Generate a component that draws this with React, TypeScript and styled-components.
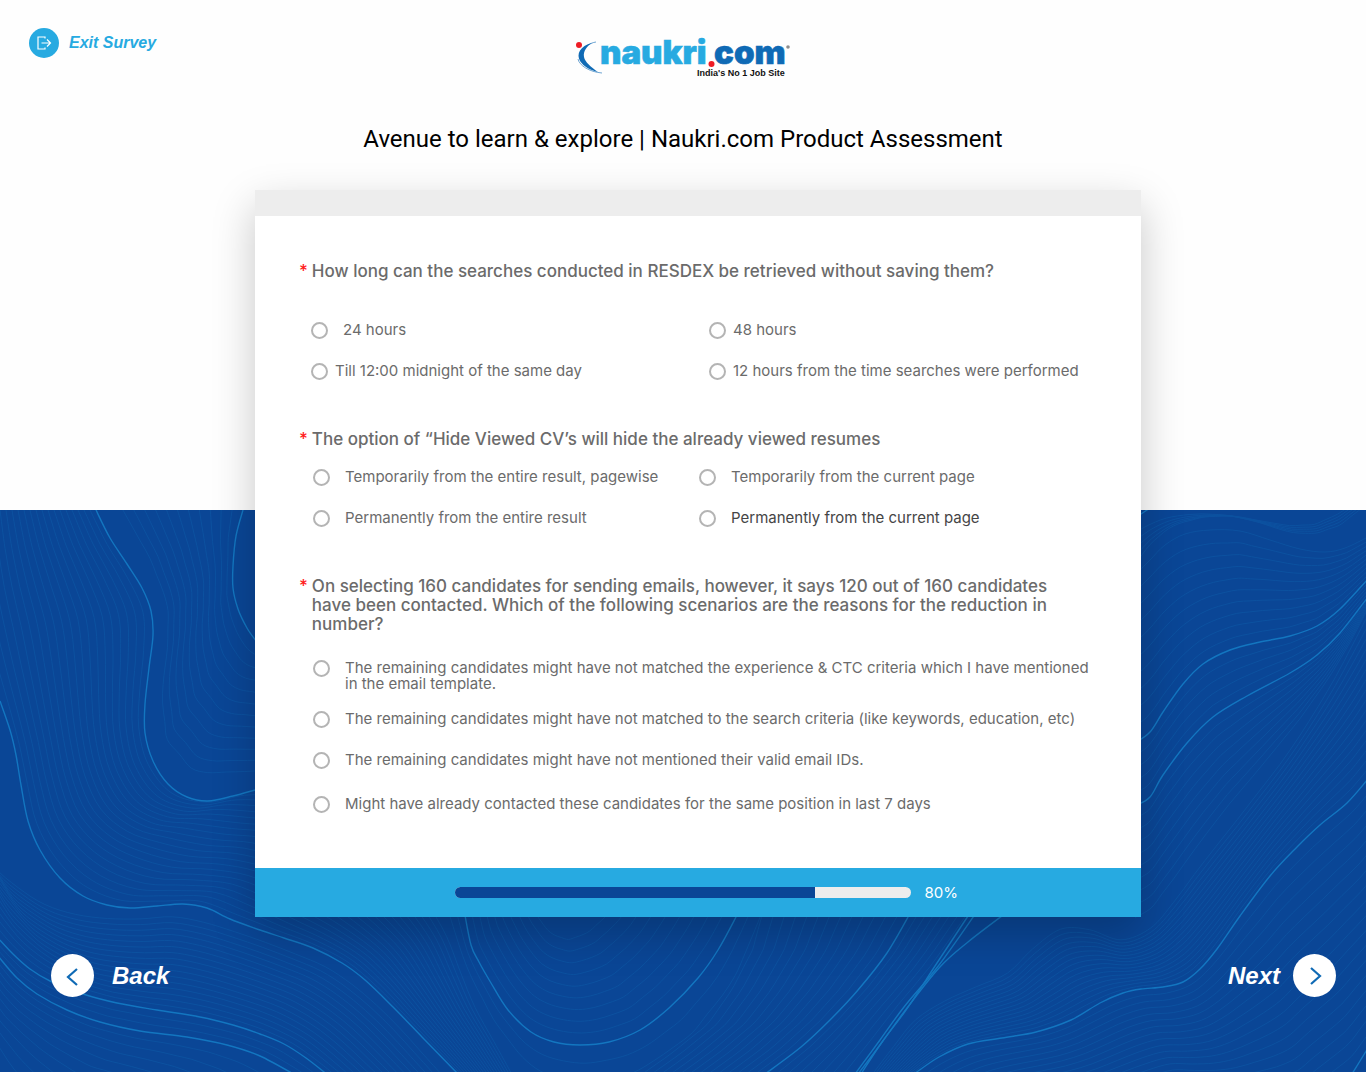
import React, { useId } from "react";
import styled, { createGlobalStyle } from "styled-components";

const colors = {
  sky: "#27aae1",
  navy: "#0a4696",
  royal: "#0f6ab5",
  line: "#1376c0",
  text: "#6b6b6b",
  dark: "#454545",
  ring: "#b4b4b4",
  red: "#ee1c25",
  pale: "#ededed",
};

const GlobalStyle = createGlobalStyle`
  *, *::before, *::after { box-sizing: border-box; }
  body { margin: 0; background: #fefefe; }
`;

const Page = styled.div`
  position: relative;
  min-height: 100vh;
  display: flex;
  flex-direction: column;
  font-family: Inter, "Open Sans", sans-serif;
  color: ${colors.text};
  isolation: isolate;
`;

const Backdrop = styled.div`
  position: absolute;
  inset: 510px 0 0;
  z-index: -1;
  overflow: hidden;
  background: ${colors.navy};

  svg {
    display: block;
    width: 100%;
    height: 100%;
  }
`;

const Header = styled.header`
  display: grid;
  grid-template-columns: 1fr auto 1fr;
  align-items: start;
  padding: 28px 29px 0;
`;

const ExitButton = styled.button`
  justify-self: start;
  display: flex;
  align-items: center;
  gap: 10px;
  padding: 0;
  border: 0;
  background: none;
  color: ${colors.sky};
  font: italic bold 16px/30px "Liberation Sans", Arial, sans-serif;
  cursor: pointer;
`;

const ExitBadge = styled.span`
  display: grid;
  place-items: center;
  width: 30px;
  height: 30px;
  border-radius: 50%;
  background: ${colors.sky};
  color: #fff;
`;

const Title = styled.h1`
  margin: 46px 0 36px;
  text-align: center;
  color: #000;
  font: 400 24px/30px Roboto, "Liberation Sans", sans-serif;
`;

const Main = styled.main`
  padding: 0 225px 0 255px;
`;

const Card = styled.form`
  background: #fff;
  box-shadow: 0 16px 40px rgba(0, 0, 0, 0.22);
`;

const CardStrip = styled.div`
  height: 26px;
  background: ${colors.pale};
`;

const CardBody = styled.div`
  display: flex;
  flex-direction: column;
  gap: 47px;
  padding: 46px 44px 55px;
`;

const Question = styled.fieldset`
  min-width: 0;
  margin: 0;
  padding: 0;
  border: 0;
`;

const Legend = styled.legend`
  padding: 0;
`;

const QuestionText = styled.span`
  display: flex;
  gap: 4px;
  max-width: 760px;
  font-size: 17px;
  font-weight: 500;
  line-height: 19px;
`;

const Star = styled.span`
  flex: 0 0 8px;
  color: #ff1e1e;
`;

const ChoiceGrid = styled.div<{ $first: number; $top: number; $left: number }>`
  display: grid;
  grid-template-columns: ${(p) => p.$first}px 1fr;
  row-gap: 17px;
  padding: ${(p) => p.$top}px 0 0 ${(p) => p.$left}px;
`;

const ChoiceList = styled.div`
  display: flex;
  flex-direction: column;
  padding: 8px 0 0 14px;
`;

const Choice = styled.label<{ $tight?: boolean; $dark?: boolean }>`
  display: flex;
  align-items: center;
  gap: ${(p) => (p.$tight ? 7 : 15)}px;
  height: 24px;
  font-size: 15px;
  line-height: 16px;
  color: ${(p) => (p.$dark ? colors.dark : "inherit")};
  cursor: pointer;
`;

const LongChoice = styled(Choice)<{ $space: number }>`
  align-items: flex-start;
  height: auto;
  margin-top: ${(p) => p.$space}px;
`;

const Radio = styled.input`
  appearance: none;
  flex: none;
  width: 17px;
  height: 17px;
  margin: 0;
  border: 2px solid ${colors.ring};
  border-radius: 50%;
  background: #fff;

  &:checked {
    border-color: ${colors.sky};
    box-shadow: inset 0 0 0 3px #fff;
    background: ${colors.sky};
  }
`;

const CardFooter = styled.div`
  display: flex;
  align-items: center;
  gap: 14px;
  height: 49px;
  padding: 0 183px 0 200px;
  background: ${colors.sky};
  color: #fff;
`;

const Track = styled.div`
  flex: 1;
  height: 11px;
  border-radius: 6px;
  overflow: hidden;
  background: ${colors.pale};
`;

const Fill = styled.div`
  height: 100%;
  background: ${colors.navy};
`;

const Percent = styled.span`
  font-size: 15px;
  line-height: 20px;
`;

const Pager = styled.nav`
  display: flex;
  justify-content: space-between;
  padding: 37px 30px 75px 51px;
`;

const PagerButton = styled.button<{ $gap: number }>`
  display: flex;
  align-items: center;
  gap: ${(p) => p.$gap}px;
  padding: 0;
  border: 0;
  background: none;
  color: #fff;
  font: italic bold 24px/43px "Liberation Sans", Arial, sans-serif;
  cursor: pointer;
`;

const PagerDisc = styled.span`
  display: grid;
  place-items: center;
  width: 43px;
  height: 43px;
  border-radius: 50%;
  background: #fff;
  color: ${colors.royal};
`;

type Pt = [number, number];

const curve = {
  a: [[96, 0], [110, 28], [127, 54], [142, 78], [151, 101], [153, 125], [149, 158], [145, 194], [145, 223], [153, 251], [168, 274], [187, 287], [208, 291], [233, 286], [255, 280]] as Pt[],
  aLong: [[96, 0], [110, 28], [127, 54], [142, 78], [151, 101], [153, 125], [149, 158], [145, 194], [145, 223], [153, 251], [168, 274], [187, 287], [208, 291], [255, 280], [320, 280], [400, 330], [450, 420], [475, 490], [515, 565]] as Pt[],
  b: [[0, 191], [10, 220], [16, 245], [21, 275], [28, 311], [40, 340], [60, 368], [83, 386], [107, 395], [130, 398], [157, 396], [183, 394], [207, 398], [230, 409], [260, 420], [284, 428], [313, 438], [342, 453], [365, 470], [393, 497], [422, 527], [458, 564]] as Pt[],
  bLong: [[-30, 0], [-28, 70], [-18, 130], [0, 191], [10, 220], [21, 275], [28, 311], [40, 340], [60, 368], [83, 386], [107, 395], [130, 398], [157, 396], [183, 394], [207, 398], [230, 409], [260, 420], [313, 438], [342, 453], [365, 470], [393, 497], [458, 564]] as Pt[],
  c: [[-2, 428], [13, 444], [30, 459], [50, 471], [83, 484], [117, 493], [157, 500], [200, 507], [233, 515], [260, 524], [284, 534], [306, 548], [329, 566]] as Pt[],
  bLow: [[-60, 191], [-40, 290], [-10, 350], [30, 385], [83, 402], [130, 404], [183, 400], [230, 414], [284, 433], [342, 458], [393, 502], [450, 566]] as Pt[],
  d: [[-2, 446], [17, 468], [37, 484], [67, 500], [100, 512], [140, 521], [187, 527], [227, 535], [260, 546], [297, 566]] as Pt[],
  corner: [[-30, 480], [-20, 520], [0, 560], [20, 590], [40, 600], [60, 610], [80, 620], [100, 630]] as Pt[],
  e: [[243, 0], [236, 26], [233, 56], [233, 78], [238, 99], [247, 118], [256, 131]] as Pt[],
  eLong: [[243, 0], [236, 26], [233, 56], [233, 78], [238, 99], [247, 118], [256, 131], [300, 150]] as Pt[],
  aShort: [[112, 0], [142, 50], [162, 98], [162, 140], [155, 194], [160, 240], [190, 275], [255, 272], [300, 265]] as Pt[],
  f: [[464, 400], [471, 435], [479, 452], [491, 473], [508, 500], [531, 522], [554, 532], [580, 535], [609, 532], [640, 520], [669, 498], [698, 468], [718, 440], [736, 407], [739, 400]] as Pt[],
  fTop: [[530, 370], [540, 395], [552, 412], [566, 418], [582, 412], [600, 395], [615, 370]] as Pt[],
  fDown: [[440, 400], [465, 470], [490, 520], [530, 575], [580, 592], [640, 580], [700, 540], [745, 480], [775, 400]] as Pt[],
  g: [[912, 400], [887, 443], [858, 480], [830, 510], [801, 537], [765, 564]] as Pt[],
  gUp: [[752, 400], [742, 440], [722, 480], [698, 515], [660, 545], [630, 566]] as Pt[],
  h: [[978, 400], [939, 455], [904, 497], [880, 530], [855, 564]] as Pt[],
  h2: [[1010, 400], [968, 432], [939, 458], [904, 502], [880, 535], [858, 564]] as Pt[],
  h3: [[972, 400], [937, 453], [906, 500], [882, 532], [861, 564]] as Pt[],
  i: [[914, 564], [939, 547], [968, 534], [1002, 528], [1036, 522], [1071, 510], [1100, 493], [1123, 483], [1141, 479], [1163, 477], [1183, 472], [1200, 459], [1217, 439], [1240, 406], [1270, 366], [1297, 337], [1320, 315], [1347, 293], [1368, 269]] as Pt[],
  iUp: [[870, 564], [910, 510], [955, 480], [1000, 465], [1040, 425], [1075, 405], [1100, 425], [1135, 428], [1160, 405], [1200, 350], [1240, 300], [1290, 235], [1330, 170], [1368, 95]] as Pt[],
  j: [[1135, 296], [1150, 287], [1163, 265], [1187, 233], [1213, 207], [1247, 186], [1290, 163], [1317, 145], [1340, 123], [1368, 87]] as Pt[],
  jLow: [[1135, 420], [1150, 412], [1175, 380], [1200, 345], [1230, 305], [1262, 265], [1300, 215], [1330, 170], [1350, 135], [1368, 100]] as Pt[],
  k: [[1135, 233], [1150, 222], [1163, 202], [1183, 174], [1203, 154], [1230, 140], [1260, 132], [1290, 126], [1317, 116], [1340, 99], [1368, 69]] as Pt[],
  t: [[1135, 65], [1150, 50], [1165, 35], [1185, 24], [1210, 20], [1240, 21], [1270, 30], [1300, 39], [1325, 42], [1345, 38], [1368, 27]] as Pt[],
  s: [[1135, 15], [1150, 8], [1170, 3], [1200, 2], [1230, 5], [1260, 13], [1290, 24], [1315, 26], [1340, 18], [1368, -4]] as Pt[],
  sEnd: [[1135, 62], [1150, 38], [1170, 18], [1200, 8], [1230, 5], [1260, 10], [1290, 14], [1315, 12], [1340, 0], [1368, -20]] as Pt[],
  l: [[1352, 564], [1368, 538]] as Pt[],
  lLow: [[1010, 640], [1070, 620], [1130, 605], [1190, 590], [1250, 600], [1300, 600], [1352, 562], [1368, 540], [1390, 510]] as Pt[],
  m: [[1138, 6], [1150, -2]] as Pt[],
};

function resample(points: Pt[], count: number): Pt[] {
  const lengths = [0];
  for (let n = 1; n < points.length; n++) {
    lengths.push(lengths[n - 1] + Math.hypot(points[n][0] - points[n - 1][0], points[n][1] - points[n - 1][1]));
  }
  const total = lengths[lengths.length - 1];
  const out: Pt[] = [];
  let seg = 1;
  for (let n = 0; n < count; n++) {
    const at = (total * n) / (count - 1);
    while (seg < points.length - 1 && lengths[seg] < at) seg++;
    const t = (at - lengths[seg - 1]) / (lengths[seg] - lengths[seg - 1]);
    const [p, q] = [points[seg - 1], points[seg]];
    out.push([p[0] + (q[0] - p[0]) * t, p[1] + (q[1] - p[1]) * t]);
  }
  return out;
}

function smooth(points: Pt[]): string {
  let d = `M${points[0][0]} ${points[0][1]}`;
  for (let n = 0; n < points.length - 1; n++) {
    const p0 = points[Math.max(n - 1, 0)];
    const p1 = points[n];
    const p2 = points[n + 1];
    const p3 = points[Math.min(n + 2, points.length - 1)];
    const c1 = [p1[0] + (p2[0] - p0[0]) / 6, p1[1] + (p2[1] - p0[1]) / 6];
    const c2 = [p2[0] - (p3[0] - p1[0]) / 6, p2[1] - (p3[1] - p1[1]) / 6];
    d += `C${[...c1, ...c2, ...p2].map((v) => v.toFixed(1)).join(" ")}`;
  }
  return d;
}

function between(from: Pt[], to: Pt[], count: number): string[] {
  const a = resample(from, 22);
  const b = resample(to, 22);
  return Array.from({ length: count }, (_, n) => {
    const t = (n + 1) / (count + 1);
    return smooth(a.map((p, i): Pt => [p[0] + (b[i][0] - p[0]) * t, p[1] + (b[i][1] - p[1]) * t]));
  });
}

const faintLines = [
  ...between(curve.bLong, curve.aLong, 20),
  ...between(curve.aShort, curve.eLong, 11),
  ...between(curve.bLow, curve.c, 16),
  ...between(curve.c, curve.d, 2),
  ...between(curve.d, curve.corner, 9),
  ...between(curve.fTop, curve.f, 9),
  ...between(curve.f, curve.fDown, 2),
  ...between(curve.gUp, curve.g, 13),
  ...between(curve.g, curve.h, 7),
  ...between(curve.iUp, curve.i, 16),
  ...between(curve.j, curve.jLow, 9),
  ...between(curve.k, curve.j, 4),
  ...between(curve.t, curve.k, 9),
  ...between(curve.s, curve.sEnd, 5),
  ...between(curve.i, curve.lLow, 17),
  smooth(curve.t),
];

const boldLines = [
  curve.a, curve.b, curve.c, curve.d, curve.e, curve.f, curve.g, curve.h,
  curve.h2, curve.h3, curve.i, curve.j, curve.k, curve.l, curve.m,
].map(smooth);

function Waves() {
  return (
    <Backdrop aria-hidden="true">
      <svg viewBox="0 0 1366 562" preserveAspectRatio="xMidYMid slice" fill="none" stroke={colors.line}>
        <g strokeWidth="1" opacity="0.24">
          {faintLines.map((d, n) => <path key={n} d={d} />)}
        </g>
        <g strokeWidth="1.4">
          {boldLines.map((d, n) => <path key={n} d={d} />)}
        </g>
      </svg>
    </Backdrop>
  );
}

function Logo() {
  return (
    <svg width="216" height="50" viewBox="0 0 216 50" role="img" aria-label="naukri.com">
      <path d="M17 15C5 18 1 26 5 33c4 6 10 9 18 11C16 39 10 34 9 29c-1-6 3-11 8-14Z" fill={colors.royal} />
      <path d="M21 14C14 15 8 20 7 25" fill="none" stroke={colors.royal} strokeWidth="0.6" />
      <path d="M3 31c1 6 11 13 24 14" fill="none" stroke={colors.royal} strokeWidth="0.6" />
      <circle cx="4" cy="17" r="3" fill={colors.red} />
      <g fontFamily="Inter, sans-serif" fontWeight="900" fontSize="33" strokeWidth="0.6">
        <text x="25" y="36" fill={colors.sky} stroke={colors.sky}>naukri</text>
        <text x="139" y="36" fill={colors.royal} stroke={colors.royal}>com</text>
      </g>
      <circle cx="136.500" cy="36" r="3" fill={colors.red} />
      <circle cx="213" cy="19" r="1.800" fill="#8d8d8d" />
      <text x="122" y="48" fontFamily="Liberation Sans, Arial, sans-serif" fontWeight="bold" fontSize="9" fill="#111">
        India's No 1 Job Site
      </text>
    </svg>
  );
}

function Option({ name, text, ...rest }: { name: string; text: string; $tight?: boolean; $dark?: boolean }) {
  const id = useId();
  return (
    <Choice htmlFor={id} {...rest}>
      <Radio type="radio" id={id} name={name} />
      <span>{text}</span>
    </Choice>
  );
}

function LongOption({ name, text, space }: { name: string; text: string; space: number }) {
  const id = useId();
  return (
    <LongChoice htmlFor={id} $space={space}>
      <Radio type="radio" id={id} name={name} />
      <span>{text}</span>
    </LongChoice>
  );
}

function Ask({ children }: { children: React.ReactNode }) {
  return (
    <Legend>
      <QuestionText>
        <Star>*</Star>
        <span>{children}</span>
      </QuestionText>
    </Legend>
  );
}

const progress = { label: "80%", filled: 79 };

export default function App() {
  return (
    <>
      <GlobalStyle />
      <Page>
        <Waves />
        <Header>
          <ExitButton type="button">
            <ExitBadge>
              <svg width="16" height="16" viewBox="0 0 16 16" fill="none" stroke="currentColor" strokeWidth="1.2">
                <path d="M9 3.500V2H2v12h7v-1.500M5.500 8H14.500M11 4.500 14.500 8 11 11.500" />
              </svg>
            </ExitBadge>
            Exit Survey
          </ExitButton>
          <Logo />
        </Header>
        <Title>Avenue to learn &amp; explore | Naukri.com Product Assessment</Title>
        <Main>
          <Card>
            <CardStrip />
            <CardBody>
              <Question>
                <Ask>How long can the searches conducted in RESDEX be retrieved without saving them?</Ask>
                <ChoiceGrid $first={398} $top={37} $left={12}>
                  <Option name="searches" text="24 hours" />
                  <Option name="searches" text="48 hours" $tight />
                  <Option name="searches" text="Till 12:00 midnight of the same day" $tight />
                  <Option name="searches" text="12 hours from the time searches were performed" $tight />
                </ChoiceGrid>
              </Question>
              <Question>
                <Ask>The option of “Hide Viewed CV’s will hide the already viewed resumes</Ask>
                <ChoiceGrid $first={386} $top={16} $left={14}>
                  <Option name="viewed" text="Temporarily from the entire result, pagewise" />
                  <Option name="viewed" text="Temporarily from the current page" />
                  <Option name="viewed" text="Permanently from the entire result" />
                  <Option name="viewed" text="Permanently from the current page" $dark />
                </ChoiceGrid>
              </Question>
              <Question>
                <Ask>
                  On selecting 160 candidates for sending emails, however, it says 120 out of 160 candidates have been
                  contacted. Which of the following scenarios are the reasons for the reduction in number?
                </Ask>
                <ChoiceList>
                  <LongOption
                    name="reduction"
                    space={18}
                    text="The remaining candidates might have not matched the experience & CTC criteria which I have mentioned in the email template."
                  />
                  <LongOption
                    name="reduction"
                    space={19}
                    text="The remaining candidates might have not matched to the search criteria (like keywords, education, etc)"
                  />
                  <LongOption
                    name="reduction"
                    space={24}
                    text="The remaining candidates might have not mentioned their valid email IDs."
                  />
                  <LongOption
                    name="reduction"
                    space={27}
                    text="Might have already contacted these candidates for the same position in last 7 days"
                  />
                </ChoiceList>
              </Question>
            </CardBody>
            <CardFooter>
              <Track role="progressbar" aria-label="Survey progress" aria-valuenow={80} aria-valuemin={0} aria-valuemax={100}>
                <Fill style={{ width: `${progress.filled}%` }} />
              </Track>
              <Percent>{progress.label}</Percent>
            </CardFooter>
          </Card>
        </Main>
        <Pager>
          <PagerButton type="button" $gap={18}>
            <PagerDisc>
              <svg width="20" height="20" viewBox="0 0 20 20" fill="none" stroke="currentColor" strokeWidth="2.200">
                <path d="M14 3 5 11l9 8" />
              </svg>
            </PagerDisc>
            Back
          </PagerButton>
          <PagerButton type="button" $gap={13}>
            Next
            <PagerDisc>
              <svg width="20" height="20" viewBox="0 0 20 20" fill="none" stroke="currentColor" strokeWidth="2.200">
                <path d="m6 2 9 8-9 8" />
              </svg>
            </PagerDisc>
          </PagerButton>
        </Pager>
      </Page>
    </>
  );
}
